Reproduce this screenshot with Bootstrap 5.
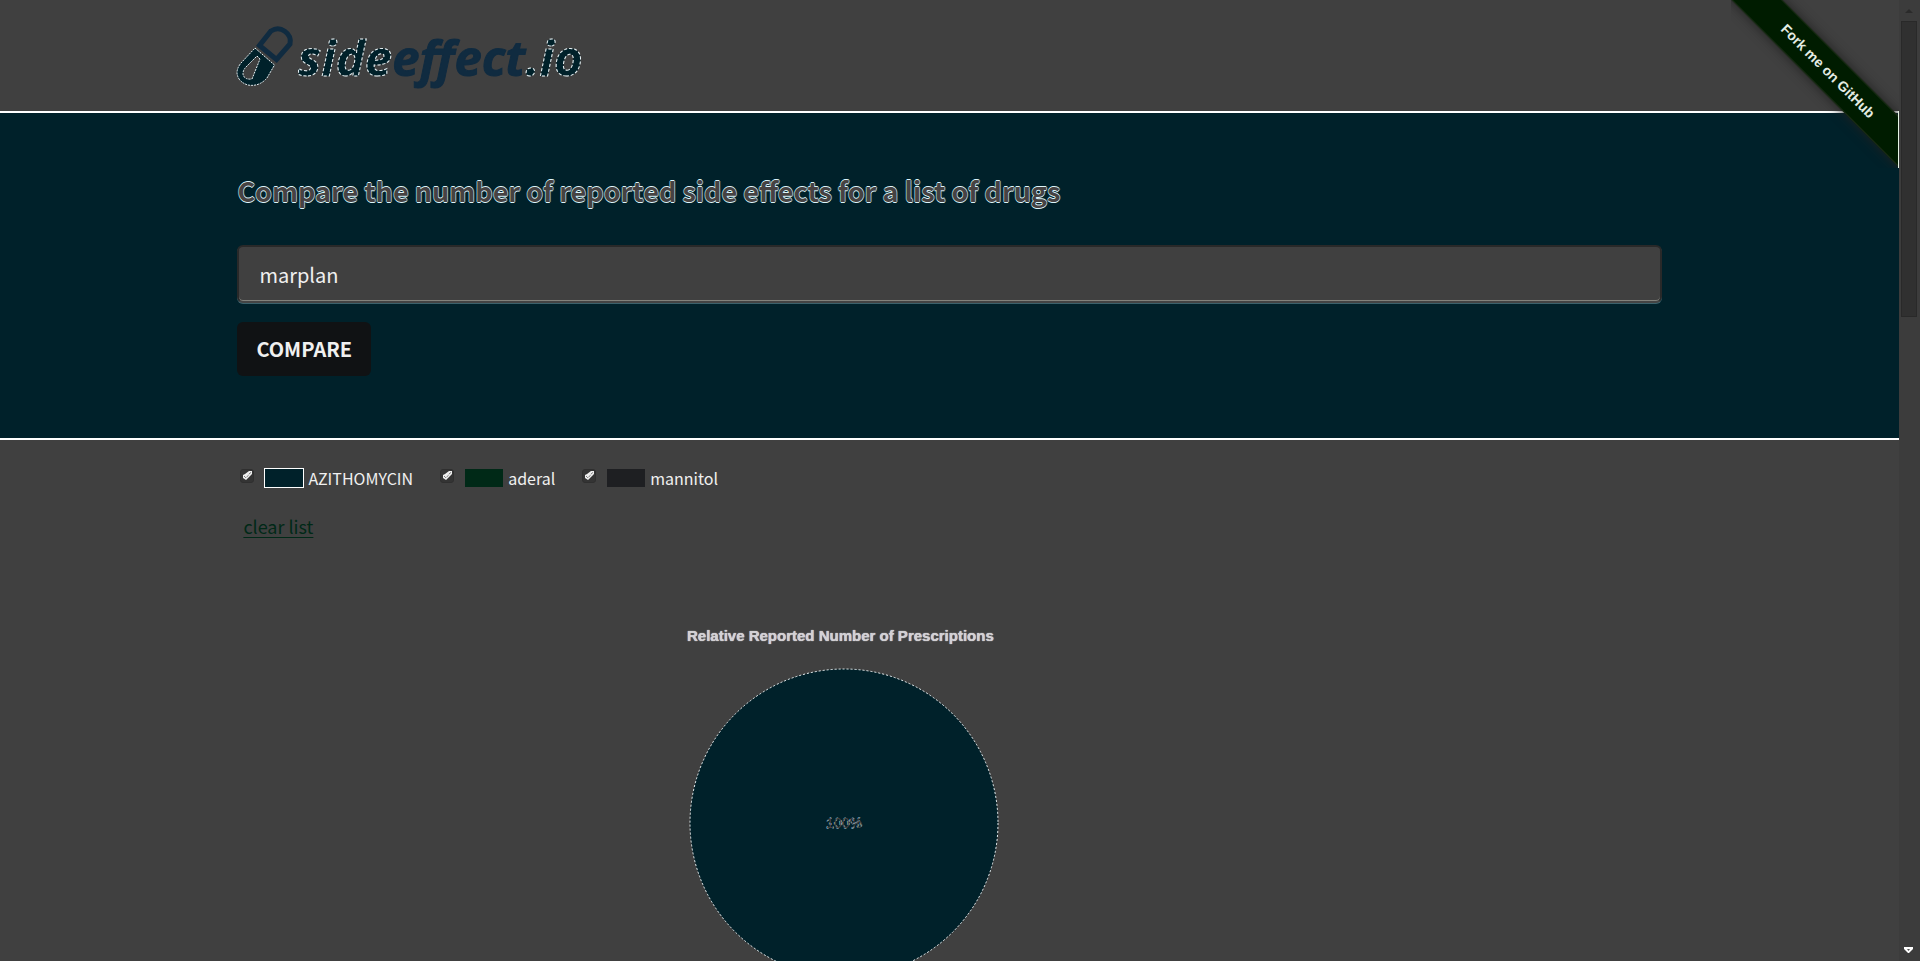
<!DOCTYPE html>
<html lang="en">
<head>
<meta charset="utf-8">
<meta name="viewport" content="width=device-width, initial-scale=1">
<title>sideeffect.io</title>
<link href="https://cdn.jsdelivr.net/npm/bootstrap@5.3.0/dist/css/bootstrap.min.css" rel="stylesheet">
<style>
  :root { --page: #404040; --teal: #00212a; --navy: #102b40; --green: #002917; --ink: #1e1f22; }
  body { background: var(--page); color: #f0f0f0; font-family: "Noto Sans CJK SC", "Open Sans", sans-serif; font-size: 16px; line-height: 24px; }
  .wrap { width: 75%; }
  .site-head { border-bottom: 2px solid #fff; padding-top: 20px; }
  .hero { background: var(--teal); border-bottom: 2px solid #fff; padding: 58px 0 62px; }
  .hero h1 { color: #464242; font-size: 27px; line-height: 40px; font-weight: 700; margin-bottom: 34px;
    text-shadow: 0 1px #dcf4fa, 0 -1px #dcf4fa, 1px 0 #6d929e, -1px 0 #6d929e; }
  .drug-input, .drug-input:focus { height: 58px; background: var(--page); color: #f0f0f0; border: 2px solid #292929; border-bottom-color: #444;
    border-radius: 6px; padding: 0 20px; font-size: 20px; box-shadow: inset 0 -1px #82827c, 0 1px #3c626c; }
  .btn-compare { background: #101214; color: #f0f0f0; font-size: 20px; line-height: 30px; font-weight: 700; padding: 12px 19px; border: 0; border-radius: 6px; margin-top: 19px; }
  .legend-row { padding-top: 26px; column-gap: 24px; }
  .legend-row label { gap: 5px; }
  .tick { appearance: none; width: 14px; height: 14px; margin: 0 6px 4px 3px; border-radius: 3px; border: 1px solid #2f2f2f;
    background: #343434 url("data:image/svg+xml,%3Csvg xmlns='http://www.w3.org/2000/svg' viewBox='0 0 12 12'%3E%3Cpath d='M2 8L5 10L11 4V1H8L4 4L2 5Z' fill='%23eee'/%3E%3Cpath d='M3 6l2 2 5-6' fill='none' stroke='%23444' stroke-width='1' stroke-dasharray='1 1'/%3E%3C/svg%3E"); }
  .swatch { width: 38px; height: 18px; }
  .swatch-on { outline: 1px solid #fff; }
  .clear-link, .clear-link:hover { color: var(--green); font-size: 18px; line-height: 28px; margin: 22px 0 0 6px; text-underline-offset: 3px; }
  .pie-area { width: 920px; max-width: 100%; margin-left: 147px; padding-top: 86px; }
  .pie-title { font: 700 15px/20px "Liberation Sans", sans-serif; color: #d2d0d4; text-shadow: 0 0 1px #fff; margin: 0 8px 21px 0; }
  .pie-text { font: 14px "Liberation Sans", sans-serif; fill: #464242; stroke: #b9dbe4; stroke-width: 1px; stroke-dasharray: 2 4; paint-order: stroke; }
  .ribbon-box { position: absolute; top: 0; right: 0; width: 168px; height: 168px; overflow: hidden; pointer-events: none; }
  .ribbon { position: absolute; left: -53px; top: 53px; width: 300px; height: 36px; transform: rotate(45deg); background: #001c00;
    border: 1px solid #1c2d17; box-shadow: 0 0 12px #202020; color: #e4ece4; font: 700 14px/34px "Liberation Sans", sans-serif;
    text-align: center; text-decoration: none; pointer-events: auto; }
  .ribbon-edge { position: absolute; right: 0; top: 111px; width: 1px; height: 57px; background: #e6f4e6; }
  .scroll-rail { width: 21px; background: #3c3c3c; padding: 0 3px 8px 2px; }
  .scroll-thumb { height: 296px; background: #303030; border: 1px solid #292929; }
</style>
</head>
<body>
<div class="d-flex vh-100 overflow-hidden">
  <div class="flex-grow-1 position-relative overflow-hidden">
    <header class="site-head">
      <div class="wrap mx-auto">
        <a class="d-inline-block align-top" href="#" aria-label="sideeffect.io">
          <svg class="d-block overflow-visible" width="360" height="91" viewBox="0 0 360 91">
            <path d="M22.500 25.500L39.500 39.500L53 24A12.500 12.500 0 0 0 34 11Z" fill="none" stroke="#102b40" stroke-width="5"/>
            <g stroke="#e8f3f6" stroke-dasharray="2 1">
              <path d="M18 28L37.500 45L30 58Q22 67 11 65Q1 62 0 53Q0 48 4 43Z" fill="#00212a"/>
              <path d="M20 36L23 39L15 59Q7 60 6 54Q6 50 9 47Z" fill="#404040"/>
            </g>
            <g font-family="Open Sans, sans-serif" font-weight="700" font-style="italic" font-size="49">
              <text x="61" y="56" fill="#00212a" stroke="#e8f3f6" stroke-width="1" stroke-dasharray="3 2">side<tspan fill="#102b40" stroke="#102b40" stroke-dasharray="none">effect</tspan>.io</text>
            </g>
          </svg>
        </a>
      </div>
    </header>
    <main>
      <section class="hero">
        <form class="wrap mx-auto">
          <h1>Compare the number of reported side effects for a list of drugs</h1>
          <input class="form-control drug-input" type="text" value="marplan" aria-label="Drug name">
          <button class="btn btn-compare" type="button">COMPARE</button>
        </form>
      </section>
      <section class="wrap mx-auto">
        <div class="legend-row d-flex flex-wrap">
          <label class="d-flex align-items-center"><input class="tick" type="checkbox" checked><span class="swatch swatch-on" style="background:#00212a"></span>AZITHOMYCIN</label>
          <label class="d-flex align-items-center"><input class="tick" type="checkbox" checked><span class="swatch" style="background:#002917"></span>aderal</label>
          <label class="d-flex align-items-center"><input class="tick" type="checkbox" checked><span class="swatch" style="background:#1e1f22"></span>mannitol</label>
        </div>
        <a class="clear-link d-inline-block" href="#">clear list</a>
        <div class="pie-area text-center">
          <h2 class="pie-title">Relative Reported Number of Prescriptions</h2>
          <svg width="312" height="312" viewBox="0 0 312 312" role="img" aria-label="Share of prescriptions">
            <circle cx="156" cy="156" r="154" fill="#00212a" stroke="#e8f3f6" stroke-dasharray="2 2"/>
            <text class="pie-text" x="156" y="161" text-anchor="middle">100%</text>
          </svg>
        </div>
      </section>
    </main>
    <div class="ribbon-box">
      <a class="ribbon" href="#">Fork me on GitHub</a>
      <span class="ribbon-edge"></span>
    </div>
  </div>
  <div class="scroll-rail d-flex flex-column flex-shrink-0" aria-hidden="true">
    <svg width="16" height="21" viewBox="0 0 16 21"><path d="M4 13L8 9L12 13Z" fill="#2a2a2a"/></svg>
    <div class="scroll-thumb"></div>
    <svg class="mt-auto" width="16" height="6" viewBox="0 0 16 6"><path d="M3 0H12V2L8 6H7L3 2Z" fill="#fff"/><path d="M6 2H9L7.500 4Z" fill="#555"/></svg>
  </div>
</div>
<script src="https://cdn.jsdelivr.net/npm/bootstrap@5.3.0/dist/js/bootstrap.bundle.min.js"></script>
</body>
</html>
